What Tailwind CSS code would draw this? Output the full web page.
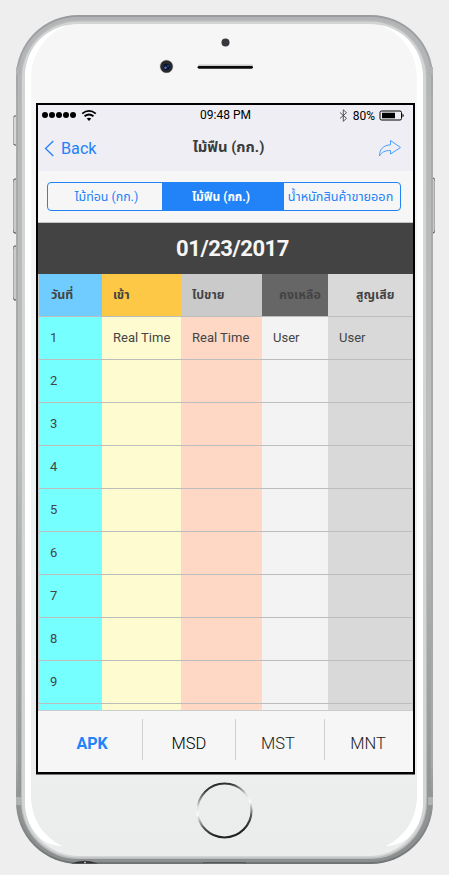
<!DOCTYPE html>
<html lang="th">
<head>
<meta charset="utf-8">
<title>ไม้ฟืน (กก.)</title>
<script src="https://cdn.jsdelivr.net/npm/@tailwindcss/browser@4"></script>
</head>
<body class="bg-[#eeeeee] w-[449px] h-[875px] overflow-hidden font-[Roboto,'Noto_Sans_Thai','Noto_Sans',sans-serif] text-[#444]">
<div class="relative w-[449px] h-[875px] pt-[103px] pl-[36px]">
  <!-- device body -->
  <svg class="absolute inset-0" width="449" height="875" viewBox="0 0 449 875" fill="none">
    <defs>
      <linearGradient id="edge" x1="0" y1="0" x2="0" y2="1"><stop offset="0" stop-color="#999b9e"/><stop offset=".1" stop-color="#a8aaac"/><stop offset=".88" stop-color="#a6a8aa"/><stop offset="1" stop-color="#707274"/></linearGradient>
      <linearGradient id="band" x1="0" y1="0" x2="0" y2="1"><stop offset="0" stop-color="#b2b4b6"/><stop offset=".5" stop-color="#bcbec0"/><stop offset="1" stop-color="#8b8e8e"/></linearGradient>
      <linearGradient id="face" x1="0" y1="0" x2="0" y2="1"><stop offset="0" stop-color="#f6f6f6"/><stop offset=".3" stop-color="#f4f5f5"/><stop offset="1" stop-color="#ebedec"/></linearGradient>
      <linearGradient id="ring" x1="0" y1="0" x2=".25" y2="1"><stop offset="0" stop-color="#222"/><stop offset=".15" stop-color="#333"/><stop offset=".4" stop-color="#ddd"/><stop offset=".55" stop-color="#fafafa"/><stop offset=".8" stop-color="#555"/><stop offset="1" stop-color="#222"/></linearGradient>
      <linearGradient id="btn" x1="0" y1="0" x2="0" y2="1"><stop offset="0" stop-color="#444"/><stop offset=".06" stop-color="#aaa"/><stop offset=".94" stop-color="#aaa"/><stop offset="1" stop-color="#333"/></linearGradient>
    </defs>
    <rect x="13.500" y="116" width="4" height="29" rx="1.500" fill="#d6d7d8" stroke="url(#btn)"/>
    <rect x="13.500" y="179" width="4" height="54" rx="1.500" fill="#c9cacb" stroke="url(#btn)"/>
    <rect x="13.500" y="246" width="4" height="54" rx="1.500" fill="#c9cacb" stroke="url(#btn)"/>
    <rect x="430.500" y="178" width="4" height="55" rx="1.500" fill="#c9cacb" stroke="url(#btn)"/>
    <rect x="16" y="15" width="417" height="849" rx="62" fill="url(#edge)"/>
    <rect x="18" y="17" width="413" height="845" rx="60" fill="url(#band)"/>
    <rect x="21" y="20" width="406" height="839" rx="57" fill="#b9bbbc"/>
    <rect x="22" y="21.500" width="404" height="836" rx="56" fill="#d2d5d4"/>
    <rect x="25" y="24" width="398" height="832" rx="54" fill="url(#face)"/>
    <path d="M68 25C42 30 25 50 25 78V802C25 826 40 846 62 846C42 836 31 818 31 795V78C31 56 44 34 68 25Z" fill="#fff"/>
    <path d="M380 25C406 30 423 50 423 78V802C423 826 408 846 386 846C406 836 417 818 417 795V78C417 56 404 34 380 25Z" fill="#fff"/>
    <path d="M16 67h5v8h-5zM428 67h5v8h-5zM16 797h5v8h-5zM428 797h5v8h-5z" fill="#b0b2b3"/>
    <path d="M71 863.500Q85 858 98 863.500Z" fill="#333"/><circle cx="85" cy="862.500" r="1" fill="#bbb"/>
    <path d="M203 863L206 862.500H242L246 863" stroke="#555"/>
    <circle cx="225.500" cy="42.500" r="4" fill="#38383c"/>
    <circle cx="166.500" cy="66.500" r="7" fill="#ddd"/><circle cx="166.500" cy="66.500" r="6.300" fill="#27292b"/><circle cx="166.500" cy="67" r="3.300" fill="#081433"/><circle cx="165.500" cy="67.800" r="1.200" fill="#5878b4"/><circle cx="168" cy="66" r="1" fill="#203d90"/>
    <path d="M199 65.500H252" stroke="#c9c9c9" stroke-width="2" stroke-linecap="round"/>
    <path d="M199 67.300H251.500" stroke="#080808" stroke-width="2.800" stroke-linecap="round"/>
    <circle cx="224.500" cy="810.500" r="28" stroke="#f8f8f8" stroke-width="1"/>
    <circle cx="224.500" cy="810.500" r="27" stroke="url(#ring)" stroke-width="2.200"/>
  </svg>

  <main class="relative flex flex-col w-[379px] h-[671px] border-2 border-black bg-[#f6f6f6] shadow-[0_1px_0_#777]">
    <header class="h-[66px] shrink-0 bg-[#efeef4]">
      <div class="grid grid-cols-3 items-center h-5 pl-[6px] pr-[8px] text-[12px] text-black">
        <svg class="-ml-[2px]" width="58" height="14" viewBox="0 0 58 14" fill="none"><g fill="#000"><circle cx="3" cy="7" r="3"/><circle cx="10" cy="7" r="3"/><circle cx="17" cy="7" r="3"/><circle cx="24" cy="7" r="3"/><circle cx="31" cy="7" r="3"/><path d="M44.700 10.500Q47 8.900 49.300 10.500L47 13Z"/></g><path d="M40.200 5.600Q47 .2 53.800 5.600M42.500 8.300Q47 4.800 51.500 8.300" stroke="#000" stroke-width="1.800"/></svg>
        <span class="text-center whitespace-nowrap pl-[2px]">09:48 PM</span>
        <div class="flex items-center justify-end">
          <svg class="mr-[5px]" width="9" height="13" viewBox="0 0 9 13" fill="none" stroke="#333" stroke-width=".8"><path d="M1 3.500L7.500 9.300L4.300 12.300V.8L7.500 3.700L1 9.500"/></svg>
          <span class="pt-px">80%</span>
          <svg class="ml-[4px]" width="26" height="11" viewBox="0 0 26 11" fill="none"><rect x="1" y="1" width="21.500" height="9" rx="1.500" stroke="#000"/><path d="M3 2.800H16V8.300H3ZM23.500 3.500Q26 5.500 23.500 7.500Z" fill="#000"/></svg>
        </div>
      </div>
      <div class="grid grid-cols-3 items-center h-[46px] pl-[6px] pr-[11px] pb-[2px]">
        <div class="flex items-center gap-[6px] pt-[3px] text-[16.2px] text-[#2282f7]">
          <svg width="11" height="17" viewBox="0 0 11 17" fill="none" stroke="#2282f7" stroke-width="1.300"><path d="M9.300 1L1.500 8.500L9.300 16"/></svg>
          <span class="pt-[2px]">Back</span>
        </div>
        <h1 class="text-center text-[14.8px] font-bold whitespace-nowrap text-[#3b3b3b] pl-[11px]">ไม้ฟืน (กก.)</h1>
        <svg class="justify-self-end mt-[2px]" width="24" height="18" viewBox="0 0 24 18" fill="none" stroke="#469ffb" stroke-width="1"><path d="M12.500 1.500L22.500 8.500L12.500 15V11.500C7 11.500 3.500 13 1.500 17C1.500 10 5.500 6.300 12.500 5.800Z"/></svg>
      </div>
    </header>

    <div class="h-[52px] shrink-0 border-b border-[#c4c4c4] pt-[11px] px-[9px]">
      <div class="grid grid-cols-[114px_122px_1fr] h-[29px] w-[354px] rounded-[4px] border border-[#2282f7] overflow-hidden text-[12px] text-[#2282f7] text-center whitespace-nowrap leading-[28px]">
        <span class="text-[12.400px] pl-[3px]">ไม้ท่อน (กก.)</span>
        <span class="bg-[#2282f7] text-white font-bold pr-[4px]">ไม้ฟืน (กก.)</span>
        <span class="text-[12.700px] pr-[3px]">น้ำหนักสินค้าขายออก</span>
      </div>
    </div>

    <div class="h-[51px] shrink-0 bg-[#434343] text-[#f6f6f6] text-center font-bold text-[22px] tracking-[-0.450px] leading-[51px] pl-[14px]">01/23/2017</div>

    <section class="h-[437px] shrink-0 overflow-hidden border-x border-b border-[#cccccc] text-[13px]">
      <div class="grid grid-cols-[63px_79px_81px_66px_1fr] h-[43px] border-b border-[#bdbdbd] font-bold leading-[42px] text-[12.400px] whitespace-nowrap">
        <span class="bg-[#70ccff] pl-[12px]">วันที่</span><span class="bg-[#fcc845] pl-[11px]">เข้า</span><span class="bg-[#cacaca] pl-[11px]">ไปขาย</span><span class="bg-[#666] pl-[17px]">คงเหลือ</span><span class="bg-[#d9d9d9] pl-[28px]">สูญเสีย</span>
      </div>
      <div id="rows"></div>
    </section>

    <nav class="grid grid-cols-[105px_93px_89px_1fr] h-[61px] shrink-0 pt-[8px] text-[16.500px] font-light leading-[49px] text-center text-[#222]">
      <span class="h-[41px] border-r border-[#cfcfcf] font-bold text-[16px] text-[#2282f7] pl-[4px]">APK</span>
      <span class="h-[41px] border-r border-[#cfcfcf] text-black">MSD</span>
      <span class="h-[41px] border-r border-[#cfcfcf] pr-[4px]">MST</span>
      <span class="h-[41px] pr-[2px]">MNT</span>
    </nav>
  </main>
</div>
<script>
const rows = document.getElementById('rows');
for (let i = 1; i <= 10; i++) {
  const t = i === 1 ? ['Real Time', 'Real Time', 'User', 'User'] : ['', '', '', ''];
  rows.insertAdjacentHTML('beforeend', `<div class="grid grid-cols-[63px_79px_81px_66px_1fr] h-[43px] border-b border-[#bdbdbd] leading-[42px] whitespace-nowrap"><span class="bg-[#76ffff] pl-[11px]">${i < 10 ? i : ''}</span><span class="bg-[#fefbd0] pl-[11px]">${t[0]}</span><span class="bg-[#fed8c5] pl-[11px]">${t[1]}</span><span class="bg-[#f3f3f3] pl-[11px]">${t[2]}</span><span class="bg-[#d9d9d9] pl-[11px]">${t[3]}</span></div>`);
}
</script>
</body>
</html>
